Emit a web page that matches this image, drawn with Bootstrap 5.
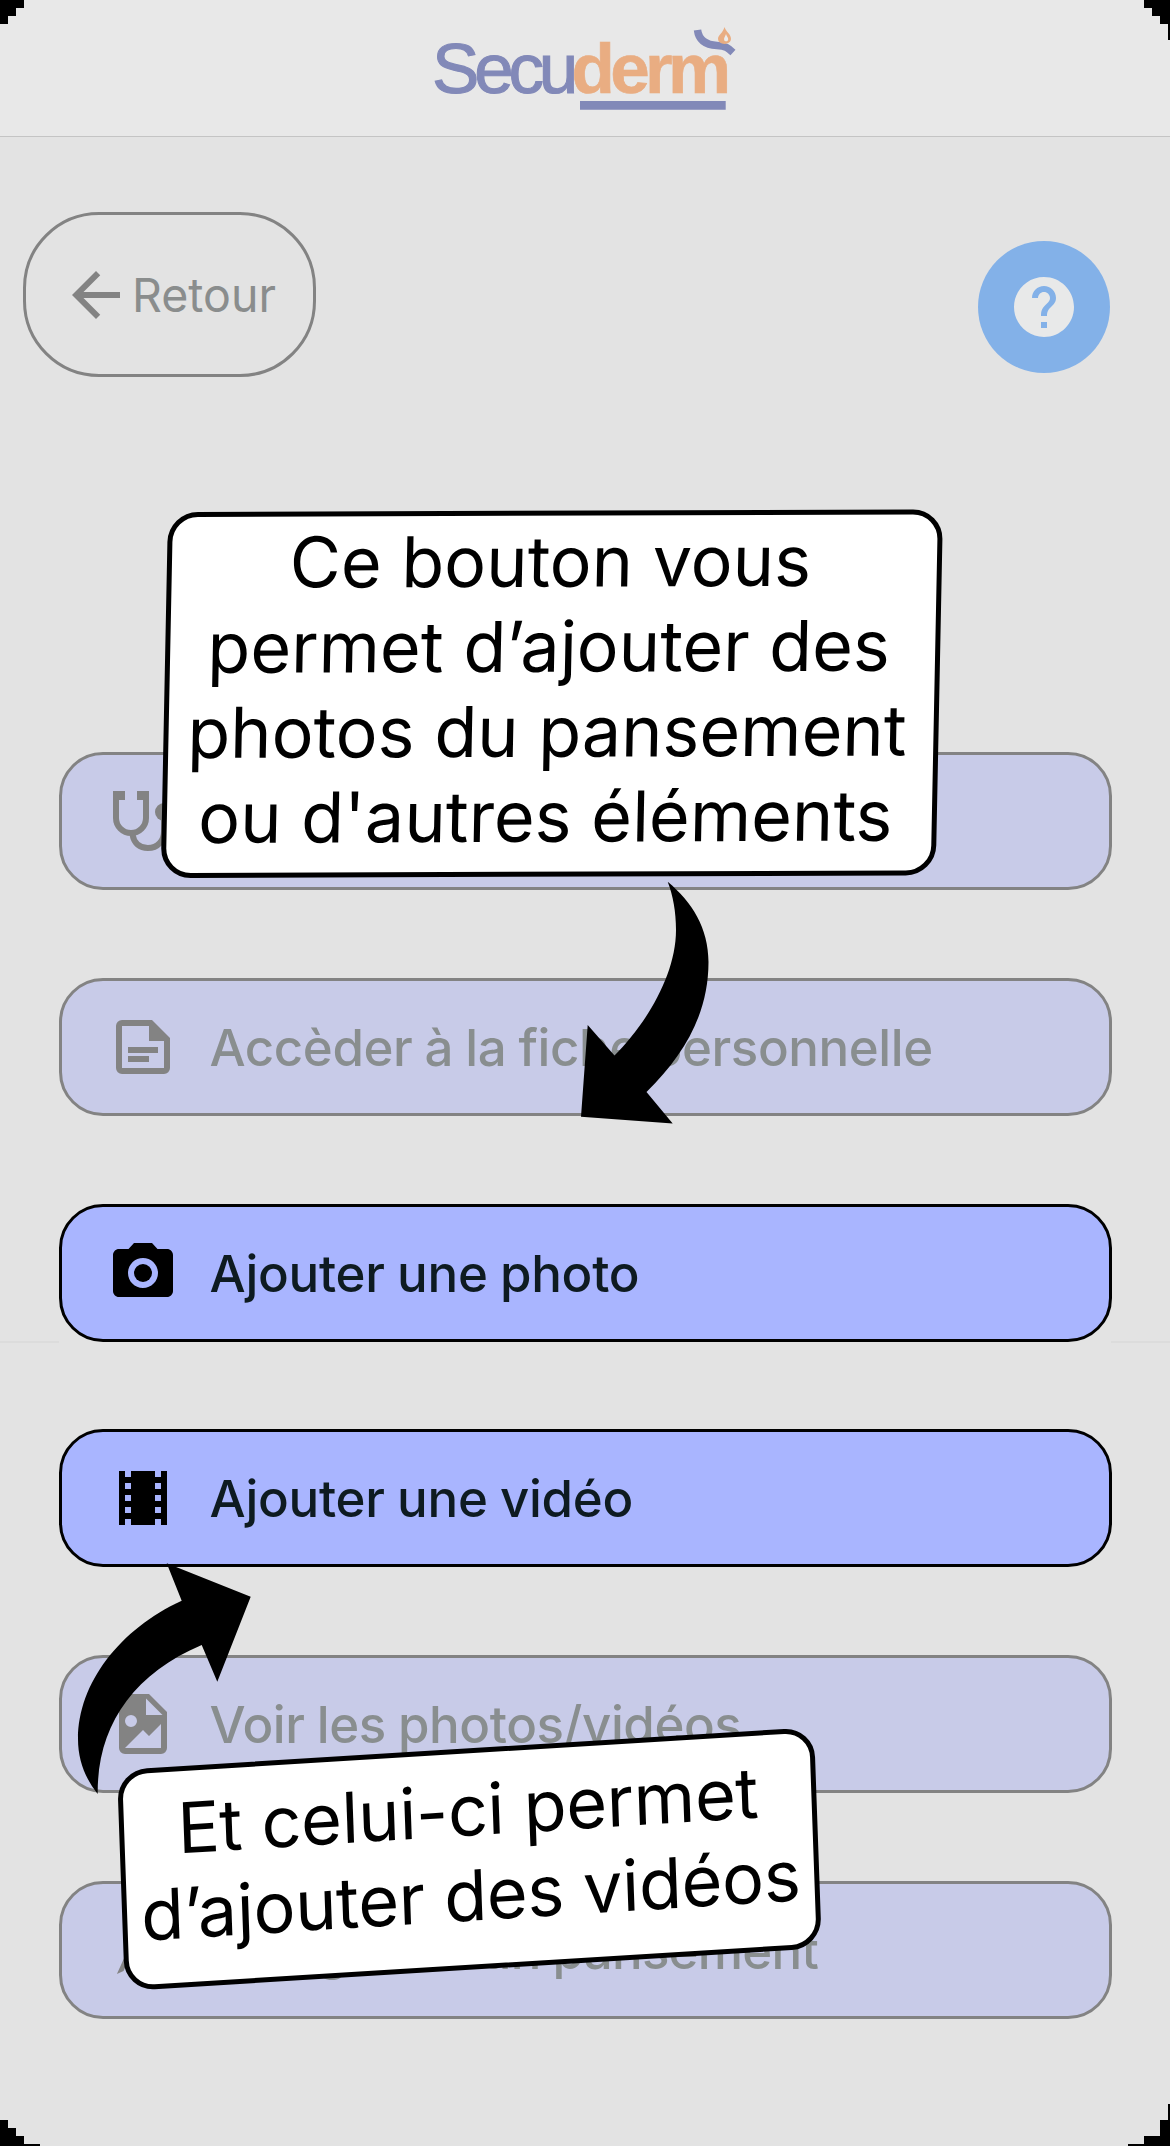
<!DOCTYPE html>
<html lang="fr">
<head>
<meta charset="utf-8">
<meta name="viewport" content="width=device-width, initial-scale=1">
<title>Secuderm</title>
<link href="https://cdn.jsdelivr.net/npm/bootstrap@5.3.0/dist/css/bootstrap.min.css" rel="stylesheet">
<style>
body{background:#e3e3e3;font-family:Inter,"Liberation Sans",sans-serif;color:#0e1b21}
.app-screen{width:1170px;height:2146px;overflow:hidden}
.app-bar{height:137px;background:#e8e8e8;border-bottom:1px solid #c4c4c4}
.logo-word{font-family:"Liberation Sans",Arial,sans-serif;font-size:71px}
.logo-secu{fill:#8289b8;stroke:#8289b8;stroke-width:1.1px;letter-spacing:-5.2px}
.logo-derm{fill:#e9ad82;stroke:#e9ad82;stroke-width:.6px;font-weight:700;letter-spacing:-4.7px}
.top-actions{padding:75px 60px 0 23px;height:240px}
.btn-back{width:293px;height:165px;border:3px solid #838383;border-radius:76px;color:#8a8d8d;font-size:46.5px;padding:0 0 0 34px}
.btn-back span{padding-top:2px}
.btn-help{width:132px;height:132px;margin-top:29px;background:#83b1e8;color:#e8e9e9;border:0}
.glyph{width:72px;height:72px;flex:none;fill:currentColor}
.menu-list{padding:375px 58px 0 59px;gap:87.8px}
.menu-item{height:138px;border:3px solid #838383;border-radius:44px;background:#c8cbe8;color:#898e8f;font-size:51px;font-weight:500;letter-spacing:-.42px;word-spacing:-1px;padding:0 0 0 45px;gap:30.5px;line-height:1;text-align:left}
.menu-item span{padding-top:1px}
.menu-item:last-child{letter-spacing:-.76px}
.menu-item .glyph{color:#838383}
.menu-item.is-active{background:#a9b5ff;border-color:#000;color:#0e1b21;letter-spacing:-.26px}
.menu-item.is-active .glyph{color:#000}
.bubble{background:#fff;border:5px solid #000;color:#000;font-size:70px;line-height:85px;text-align:center;transform-origin:0 0;white-space:nowrap}
.bubble span{display:block}
.bubble-photo{left:167.5px;top:512px;width:775px;height:365.5px;border-radius:30px;padding:3px 8px 0 0;transform:matrix(1,-.0034,-.02,1,0,0)}
.bubble-video{left:117.4px;top:1770px;width:697px;height:221px;border-radius:30px;padding-top:14px;letter-spacing:-.3px;transform:matrix(1,-.0615,.0355,1,0,0)}
.overlay{left:0;top:0;pointer-events:none}
</style>
</head>
<body>
<div class="app-screen position-relative">
  <header class="app-bar d-flex justify-content-center">
    <svg width="370" height="136" viewBox="400 0 370 136" role="img" aria-label="Secuderm">
      <text class="logo-word" y="93"><tspan class="logo-secu" x="432">Secu</tspan><tspan class="logo-derm" x="571.500">derm</tspan></text>
      <path d="M580 101h145.700v8.700H580z" fill="#8289b8"/>
      <path d="M697.500 30C699 42 708 45 717 45.500C726 46 728 48 733 52.500" fill="none" stroke="#8289b8" stroke-width="7.500"/>
      <path d="M724.500 27C723 33 718 35 718 39a6.500 5 0 0 0 13 0C731 34 726 32 724.500 27z" fill="#e9ad82"/>
      <path d="M726 34c-.8 2.500-2.500 4-1.800 6.200.8 1.600 3.600 1.600 4-.8.2-1.500-1.400-3-2.200-5.400z" fill="#ececec"/>
    </svg>
  </header>

  <div class="top-actions d-flex justify-content-between align-items-start">
    <button class="btn btn-back d-flex align-items-center">
      <svg class="glyph" style="color:#838383" viewBox="0 0 24 24"><path d="M20 11H7.830l5.590-5.590L12 4l-8 8 8 8 1.410-1.410L7.830 13H20v-2z"/></svg>
      <span>Retour</span>
    </button>
    <button class="btn btn-help rounded-circle d-flex align-items-center justify-content-center p-0" aria-label="Aide">
      <svg class="glyph" viewBox="0 0 24 24"><path d="M12 2C6.480 2 2 6.480 2 12s4.480 10 10 10 10-4.480 10-10S17.520 2 12 2zm1 17h-2v-2h2v2zm2.070-7.750-.9.920C13.450 12.900 13 13.500 13 15h-2v-.5c0-1.100.45-2.100 1.170-2.830l1.240-1.260c.37-.36.59-.86.59-1.410 0-1.100-.9-2-2-2s-2 .9-2 2H8c0-2.210 1.790-4 4-4s4 1.790 4 4c0 .88-.36 1.680-.93 2.250z"/></svg>
    </button>
  </div>

  <main class="menu-list d-flex flex-column">
    <button class="btn menu-item d-flex align-items-center" aria-label="Consultation">
      <svg class="glyph" viewBox="0 0 24 24"><path d="M2 2h4v3H2zM10 2h4v3h-4z"/><path d="M3 2.500V11a5 5 0 0 0 10 0V2.500M8.500 16.500C9 19.500 11 21 13.600 21C17 21 19 18.500 19 15.500V11" fill="none" stroke="currentColor" stroke-width="2"/><circle cx="19" cy="9" r="3"/></svg>
    </button>
    <button class="btn menu-item d-flex align-items-center">
      <svg class="glyph" viewBox="0 0 24 24"><path fill-rule="evenodd" d="M15 3H5a2 2 0 0 0-2 2v14a2 2 0 0 0 2 2h14a2 2 0 0 0 2-2V9zM5 5h9v5h5v9H5z"/><path d="M7 12h10v2H7zM7 15h7v2H7z"/></svg>
      <span>Accèder à la fiche personnelle</span>
    </button>
    <button class="btn menu-item is-active d-flex align-items-center">
      <svg class="glyph" viewBox="0 0 24 24"><circle cx="12" cy="12" r="3"/><path d="M9 2L7.170 4H4c-1.100 0-2 .9-2 2v12c0 1.100.9 2 2 2h16c1.100 0 2-.9 2-2V6c0-1.100-.9-2-2-2h-3.170L15 2H9zm3 15c-2.760 0-5-2.240-5-5s2.240-5 5-5 5 2.240 5 5-2.240 5-5 5z"/></svg>
      <span>Ajouter une photo</span>
    </button>
    <button class="btn menu-item is-active d-flex align-items-center">
      <svg class="glyph" viewBox="0 0 24 24"><path d="M18 3v2h-2V3H8v2H6V3H4v18h2v-2h2v2h8v-2h2v2h2V3h-2zM8 17H6v-2h2v2zm0-4H6v-2h2v2zm0-4H6V7h2v2zm10 8h-2v-2h2v2zm0-4h-2v-2h2v2zm0-4h-2V7h2v2z"/></svg>
      <span>Ajouter une vidéo</span>
    </button>
    <button class="btn menu-item d-flex align-items-center">
      <svg class="glyph" viewBox="0 0 24 24"><path fill-rule="evenodd" d="M14 2H6a2 2 0 0 0-2 2v16a2 2 0 0 0 2 2h12a2 2 0 0 0 2-2V8zM13 3.500 18.500 9H13zM8 9a2 2 0 1 1 0 4 2 2 0 0 1 0-4zM6 20l6-6 2 2 4-4v8z"/></svg>
      <span>Voir les photos/vidéos</span>
    </button>
    <button class="btn menu-item d-flex align-items-center">
      <svg class="glyph" viewBox="0 0 24 24"><path d="M3.300 20 11 3h2l7.700 17-2 .5L12 6 5.500 19z"/></svg>
      <span>Enregistrer un pansement</span>
    </button>
  </main>

  <svg class="overlay position-absolute" width="1170" height="2146" viewBox="0 0 1170 2146" aria-hidden="true">
    <path d="M0 1342h59M1111 1342h59" stroke="#dadada" stroke-width="1.500"/>
    <path d="M667.700 881.700C692 902 708.500 928 708.500 962C708.500 1014 684 1055 646.500 1092L672.700 1123.500L581 1116.700L587.700 1025L614.500 1055.500C646 1024 676 975 676 930C676 912 673 895 667.700 881.700z"/>
    <path d="M250.700 1596.700L166.700 1563.300L181.700 1600.700C120 1629 78 1683 78 1739C78 1760 85 1778 97.700 1794C97 1728 131 1675 201.700 1645L217.300 1681.700z"/>
    <path d="M0 0h24v8h-8v8H8v8H0zM1170 0h-26v8h8v8h8v8h8v16h2zM0 2120h8v8h8v8h8v8h16v2H0zM1170 2104h-2v16h-8v16h-16v8h-16v2h42z" shape-rendering="crispEdges"/>
  </svg>

  <div class="bubble bubble-photo position-absolute"><span>Ce bouton vous</span><span>permet d’ajouter des</span><span>photos du pansement</span><span>ou d'autres éléments</span></div>
  <div class="bubble bubble-video position-absolute"><span>Et celui-ci permet</span><span>d’ajouter des vidéos</span></div>
</div>
<script src="https://cdn.jsdelivr.net/npm/bootstrap@5.3.0/dist/js/bootstrap.bundle.min.js"></script>
</body>
</html>
